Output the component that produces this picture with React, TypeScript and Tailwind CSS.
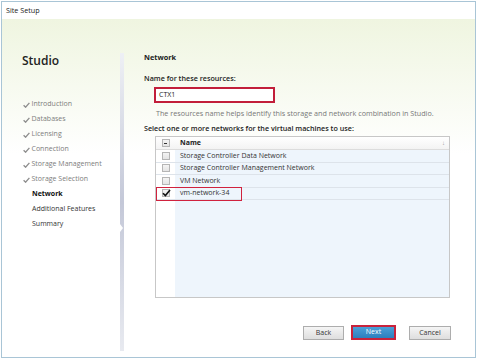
import React from "react";

const font = { fontFamily: '"Open Sans", "Noto Sans", sans-serif' };

function Check({ className = "" }: { className?: string }) {
  return (
    <svg width="7" height="6" viewBox="0 0 7 6" className={className}>
      <path d="M0.6 3.2 L2.6 5.2 L6.4 0.8" fill="none" stroke="currentColor" strokeWidth="1.3" />
    </svg>
  );
}

function Box({ checked = false, minus = false }: { checked?: boolean; minus?: boolean }) {
  return (
    <div className="relative w-[8px] h-[8px] border border-[#b5b5b5] bg-gradient-to-b from-[#f4f4f4] to-[#e4e4e4]">
      {minus && <div className="absolute left-[1.5px] top-[2.5px] w-[3px] h-[1.2px] bg-[#333]" />}
      {checked && (
        <svg width="9" height="8" viewBox="0 0 9 8" className="absolute left-[-1px] top-[-1.5px] text-[#111]">
          <path d="M1 4.2 L3.4 6.6 L8 1" fill="none" stroke="currentColor" strokeWidth="1.6" />
        </svg>
      )}
    </div>
  );
}

export default function App() {
  const done = ["Introduction", "Databases", "Licensing", "Connection", "Storage Management", "Storage Selection"];
  const rows = ["Storage Controller Data Network", "Storage Controller Management Network", "VM Network", "vm-network-34"];
  return (
    <div className="w-[477px] h-[361px] bg-white overflow-hidden" style={font}>
      <div className="ml-[1px] mt-[1px] w-[475px] h-[357px] border border-[#a9c5d6] flex flex-col">
        <div className="h-[17px] bg-white flex items-center pl-[4px] text-[7.2px] text-[#222]">Site Setup</div>
        <div className="flex-1 flex bg-gradient-to-b from-[#eff5e0] via-white via-40% to-white">
          {/* sidebar */}
          <div className="w-[118px] flex flex-col">
            <div className="pl-[20px] pt-[33px] text-[12px] leading-[18px] text-[#222] font-semibold">Studio</div>
            <div className="pt-[27px] flex flex-col">
              {done.map((d) => (
                <div key={d} className="h-[15px] flex items-center pl-[21px] text-[7px] text-[#7d7d7d]">
                  <Check className="text-[#8c8c8c] mr-[1.5px]" />
                  <span>{d}</span>
                </div>
              ))}
              <div className="h-[15px] flex items-center pl-[30px] text-[7px] text-[#111] font-bold">Network</div>
              <div className="h-[15px] flex items-center pl-[30px] text-[7px] text-[#333]">Additional Features</div>
              <div className="h-[15px] flex items-center pl-[30px] text-[7px] text-[#333]">Summary</div>
            </div>
          </div>
          {/* divider */}
          <div className="w-[4px] flex flex-col pt-[34px] pb-[6px]">
            <div className="relative flex-1 w-[4px] bg-gradient-to-b from-[#eef0f5] via-[#c4c8d8] to-[#e8eaf0]">
              <div className="absolute left-0 top-[171px] w-0 h-0 border-y-[4px] border-y-transparent border-l-[3px] border-l-white" />
            </div>
          </div>
          {/* main */}
          <div className="flex-1 flex flex-col pl-[20px] text-[7px] text-[#222]">
            <div className="pt-[33px] h-[43px] font-bold leading-[10px] text-[7.3px]">Network</div>
            <div className="mt-[11px] h-[10px] leading-[10px] font-semibold text-[7.2px]">Name for these resources:</div>
            <div className="ml-[10px] mt-[4px] w-[121px] h-[16px] border-2 border-[#c21e3a] bg-white flex items-center pl-[3px]">CTX1</div>
            <div className="ml-[12px] mt-[5px] h-[10px] leading-[10px] text-[#777] text-[7.2px]">
              The resources name helps identify this storage and network combination in Studio.
            </div>
            <div className="mt-[5px] h-[10px] leading-[10px] font-semibold text-[7.2px]">Select one or more networks for the virtual machines to use:</div>
            <div className="ml-[11px] mt-[3px] w-[295px] h-[162px] border border-[#c7c7c7] bg-white flex flex-col">
              <div className="h-[13px] flex items-center border-b border-[#dcdcdc] bg-gradient-to-b from-white to-[#f3f3f3]">
                <div className="w-[19px] flex justify-center"><Box minus /></div>
                <div className="flex-1 pl-[5px] font-bold">Name</div>
                <div className="pr-[4px] text-[6px] text-[#999]">↓</div>
              </div>
              <div className="flex-1 flex flex-col bg-[linear-gradient(to_right,white_19px,#eef5fc_19px)]">
                {rows.map((r, i) => (
                  <div key={r} className="relative h-[12.5px] flex items-center border-b border-[#dde3ea]">
                    <div className="w-[19px] flex justify-center"><Box checked={i === 3} /></div>
                    <div className="pl-[5px] text-[#333]">{r}</div>
                    {i === 3 && <div className="absolute left-0 top-[-1px] w-[86px] h-[14px] border-[1.5px] border-[#d0223e]" />}
                  </div>
                ))}
              </div>
            </div>
            <div className="flex-1 flex items-end justify-end pb-[17px] pr-[24px] gap-[7px]">
              <div className="w-[41px] h-[14px] border border-[#adadad] bg-gradient-to-b from-[#f5f5f5] to-[#dedede] flex items-center justify-center text-[#333]">Back</div>
              <div className="w-[45px] h-[15px] border-2 border-[#c8233c] bg-gradient-to-b from-[#4aa0d8] to-[#2d7fbe] flex items-center justify-center text-white">Next</div>
              <div className="ml-[6px] w-[42px] h-[14px] border border-[#adadad] bg-gradient-to-b from-[#f5f5f5] to-[#dedede] flex items-center justify-center text-[#333]">Cancel</div>
            </div>
          </div>
        </div>
      </div>
    </div>
  );
}
